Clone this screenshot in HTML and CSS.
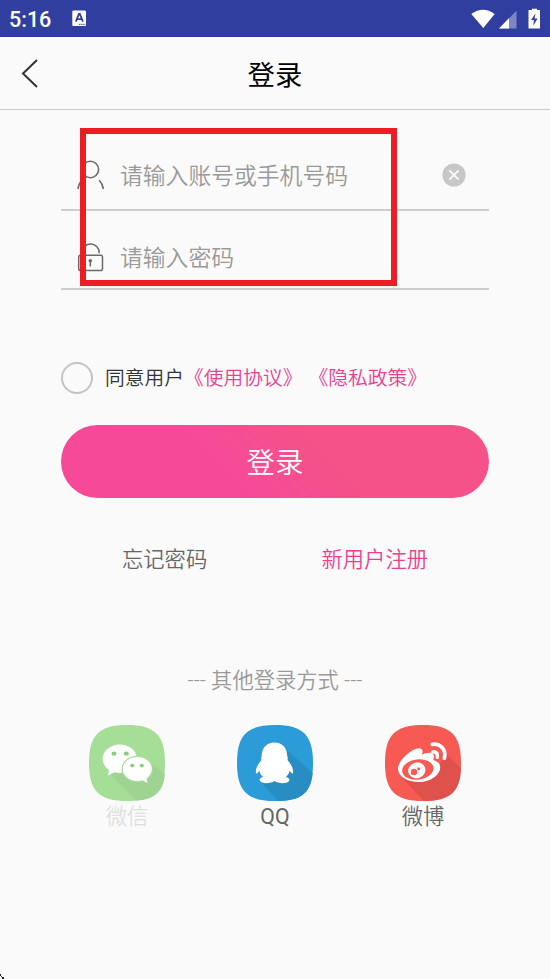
FILE: index.html
```html
<!DOCTYPE html>
<html lang="zh-CN">
<head>
<meta charset="utf-8">
<title>登录</title>
<link rel="stylesheet" href="styles.css">
</head>
<body>
<div class="status">
  <span class="time">5:16</span>
  <svg class="app-icon" width="15" height="17" viewBox="0 0 15 17"><rect x=".3" y=".5" width="13.7" height="15.6" rx="1.2" fill="#fff"/><path d="M3.8 11.6 6.9 4h.9l3.1 7.6M5 9.2h4.8" fill="none" stroke="#303f9f" stroke-width="1.8"/><path d="M7 14.3h6.5" stroke="#303f9f" stroke-width="1" stroke-dasharray="1.5 .6"/></svg>
  <svg class="signals" width="72" height="22" viewBox="470 7 72 22"><path d="M471.3 13Q483 4.5 494.7 13L483.3 27Z" fill="#fff"/><path d="M516.5 9.7V27.5H499Z" fill="#7c86c3"/><path d="M509 17.3V27.5H499Z" fill="#fff"/><path d="M529 9h3V7.8h5V9h3v18.5h-11.5V9Z" fill="#fff"/><path d="M535.5 12.5 531 19h3l-.8 6 4.3-7.5h-3Z" fill="#303f9f"/></svg>
</div>
<header class="header">
  <svg class="back" width="20" height="32" viewBox="20 57 20 32"><path d="M37 60 23 73.5 37 87" fill="none" stroke="#333" stroke-width="2"/></svg>
  <h1 class="title">登录</h1>
</header>
<main class="main">
  <div class="field field-user">
    <svg class="field-icon" width="30" height="32" viewBox="76 159 30 32"><g fill="none" stroke="#6a6a6a" stroke-width="1.6"><circle cx="90.4" cy="169.5" r="8.2"/><path d="M82 180.3q-3 2.5-4.1 8.7M99.2 180.3q3.3 3.2 4.2 8.7"/></g></svg>
    <span class="placeholder">请输入账号或手机号码</span>
    <svg class="clear" width="24" height="24" viewBox="0 0 24 24"><circle cx="12" cy="12" r="11.6" fill="#c7c7c7"/><path d="m7.3 7.3 9.4 9.4m0-9.4-9.4 9.4" stroke="#fafafa" stroke-width="1.9"/></svg>
  </div>
  <div class="field field-pass">
    <svg class="field-icon" width="30" height="32" viewBox="76 241 30 32"><g fill="none" stroke="#6a6a6a" stroke-width="1.5"><rect x="78.7" y="255.3" width="23.8" height="15.3" rx="1.8"/><path d="M82 255v-3a8.6 8.6 0 0 1 17.2 1.3"/><path d="M90.3 260v6.5"/></g><circle cx="90.3" cy="260.7" r="1.8" fill="#6a6a6a"/></svg>
    <span class="placeholder">请输入密码</span>
  </div>
  <div class="agree"><span class="check"></span><span class="agree-text">同意用户</span><span class="link">《使用协议》</span><span class="link policy">《隐私政策》</span></div>
  <div class="submit">登录</div>
  <div class="links"><span class="forgot">忘记密码</span><span class="register">新用户注册</span></div>
  <div class="other">--- 其他登录方式 ---</div>
  <div class="social">
    <div class="item">
      <svg width="76" height="76" viewBox="0 0 76 76"><path d="M38 0C66 0 76 10 76 38S66 76 38 76 0 66 0 38 10 0 38 0Z" fill="#a5df97"/><path d="M21 49 47 75.6C66 74.7 74.7 66 75.8 49L60 37Z" fill="#9fd392"/><path d="M31 19.5c-9.8 0-17.3 6.4-17.3 14.5 0 4.4 2.5 8.3 6.2 11L19.200 50.500 25.500 47.300c1.700.5 3.500.7 5.500.7 9.600 0 17-6.200 17-14S40.600 19.500 31 19.500Z" fill="#fff"/><ellipse cx="48.300" cy="44" rx="15.800" ry="13.200" fill="#a5df97"/><path d="M48.300 32c-8.200 0-14.500 5.200-14.500 12s6.300 12 14.500 12c1.800 0 3.500-.2 5-.7l5.200 3-1-4.800c3.300-2.300 5.300-5.600 5.300-9.500 0-6.800-6.300-12-14.500-12Z" fill="#fff"/><g fill="#91c984"><ellipse cx="25" cy="28.700" rx="2.600" ry="2.100"/><ellipse cx="37.300" cy="28.700" rx="2.600" ry="2.100"/><ellipse cx="43.300" cy="40.600" rx="2.100" ry="1.800"/><ellipse cx="52.800" cy="40.600" rx="2.100" ry="1.800"/></g></svg>
      <span class="label faded">微信</span>
    </div>
    <div class="item">
      <svg width="76" height="76" viewBox="0 0 76 76"><path d="M38 0C66 0 76 10 76 38S66 76 38 76 0 66 0 38 10 0 38 0Z" fill="#2b9cd8"/><path d="M51 26 75.700 48C74 66 66 74 48 75.700L41 75.900 24 57Z" fill="#278dc3"/><path d="M37.500 17.500C29.500 17.500 24.800 23 24.600 31.500 24 32.500 24.200 33.500 24.500 35 21 39 18.400 43.500 18.900 48c.3 1 1.300.6 3.500-2.300.5 2.500 1.700 4.500 3.600 6.200-2.700.8-3.600 2-3.300 3.400 1 3.900 11.300 3.500 14.800.8 3.500 2.700 14 3.100 14.800-.8.300-1.500-.8-2.600-3.400-3.400 2-1.700 3.200-3.700 3.700-6.200 2.200 2.900 3.200 3.300 3.500 2.300.5-4.500-2-9-5.600-13 .4-1.500.4-2.500-.2-3.500-.2-8.500-4.900-14-12.800-14Z" fill="#fff"/></svg>
      <span class="label latin">QQ</span>
    </div>
    <div class="item">
      <svg width="76" height="76" viewBox="0 0 76 76"><path d="M38 0C66 0 76 10 76 38S66 76 38 76 0 66 0 38 10 0 38 0Z" fill="#f75a52"/><path d="M17 53 39 76C66 76 75.500 66 75.900 43L61 29 49 49Z" fill="#df514b"/><path d="M13 43.500C13 36 26 23.600 34 23.300c3.300 0 4.300 2.700 3 6.400 4-1.800 8.500-2.700 10.700-.8 1.700 1.500 1.300 3.800.5 6 4.300 1.200 7 3.600 7 7.300C55.200 50 45.500 57 34 57 22.500 57 13 51.700 13 43.500Z" fill="#fff"/><ellipse cx="32.800" cy="44.500" rx="15.700" ry="10.200" transform="rotate(-7 32.800 44.500)" fill="#f75a52"/><ellipse cx="31.800" cy="45.300" rx="8.700" ry="7.800" transform="rotate(-20 31.800 45.300)" fill="#fff"/><circle cx="29" cy="47" r="3.200" fill="#f75a52"/><circle cx="33.700" cy="43.700" r="1.500" fill="#f75a52"/><g fill="none" stroke="#fff" stroke-width="3.700" stroke-linecap="round"><path d="M47.300 19.300c8.500-1 14 5.700 12.100 14"/><path d="M47.800 27c3.500-.3 5.300 1.900 4.500 5.200"/></g></svg>
      <span class="label">微博</span>
    </div>
  </div>
</main>
<div class="highlight"></div>
<svg class="corner" width="5" height="5" viewBox="0 0 5 5"><path d="M0 0h1v2H0ZM1 2h1v1H1ZM2 3h2v2H2Z" fill="#222"/></svg>
</body>
</html>
```

FILE: styles.css
```css
* { box-sizing: border-box; }
body {
  margin: 0;
  position: relative;
  height: 979px;
  overflow: hidden;
  background: #fafafa;
  font-family: Roboto, "Noto Sans CJK SC", sans-serif;
  font-weight: 350;
}
svg { display: block; flex: none; }
.status {
  display: flex;
  align-items: center;
  height: 37px;
  padding: 0 8px 0 9px;
  background: #303f9f;
  color: #fff;
}
.time { width: 63px; font-size: 21.5px; font-weight: 500; line-height: 37px; padding-top: 1px; }
.signals { margin-left: auto; }
.header {
  display: grid;
  grid-template-columns: 20px 1fr 20px;
  align-items: center;
  height: 73px;
  padding: 0 20px;
  border-bottom: 1px solid #c9c9c9;
}
.title { margin: 0; padding-bottom: 1px; text-align: center; font-size: 27.4px; font-weight: 400; color: #000; }
.main { padding: 0 61px; }
.field { display: flex; align-items: center; padding: 0 23px 0 15px; border-bottom: 2px solid #cdcdcd; }
.field-user { height: 101px; padding-top: 31px; }
.field-pass { height: 79px; padding-top: 15px; }
.placeholder { margin-left: 14px; padding-top: 3px; font-size: 22.8px; line-height: 30px; color: #999; white-space: nowrap; }
.clear { margin-left: auto; }
.agree { display: flex; align-items: center; height: 32px; margin-top: 72px; font-size: 19.75px; line-height: 28px; white-space: nowrap; }
.check { width: 32px; height: 32px; border: 2px solid #c3c3c3; border-radius: 50%; }
.agree-text { margin-left: 12px; color: #333; }
.agree-text, .link { position: relative; top: 0; padding-top: 1px; }
.link, .register { color: #ec3f90; }
.policy { margin-left: 6px; }
.submit {
  height: 73px;
  margin-top: 31px;
  border-radius: 37px;
  background: linear-gradient(45deg, #f64a99 38%, #f45288 62%);
  color: #fff;
  font-size: 28.5px;
  line-height: 78px;
  text-align: center;
}
.links { display: flex; justify-content: space-between; margin-top: 46px; padding: 0 61px; font-size: 21.3px; line-height: 32px; }
.forgot { color: #666; }
.other { margin-top: 89px; text-align: center; font-size: 21.3px; line-height: 32px; color: #999; }
.social { display: flex; justify-content: space-between; margin-top: 28px; padding: 0 28px; }
.item { width: 76px; display: flex; flex-direction: column; align-items: center; }
.label { font-size: 21.3px; line-height: 32px; color: #666; }
.latin { font-weight: 400; }
.faded { color: #e0e0e0; }
.highlight { position: absolute; left: 80px; top: 128px; width: 317px; height: 158px; border: 6px solid #ee1c25; }
.corner { position: absolute; left: 0; bottom: 0; }
```
